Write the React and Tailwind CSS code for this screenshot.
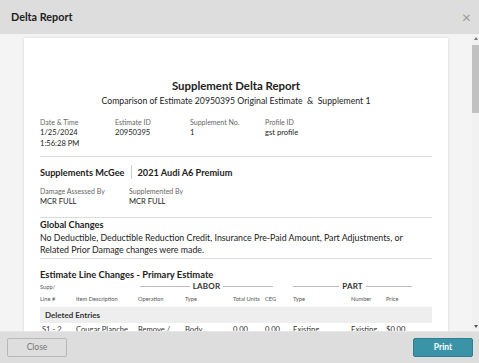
import React from 'react'

const lato = { fontFamily: 'Lato, "Open Sans", sans-serif' }

function Field({ label, children, w = 'w-[75px]' }) {
  return (
    <div className={w}>
      <div className="text-[7px] leading-[9px] text-[#666]">{label}</div>
      <div className="text-[7.6px] leading-[11px] text-[#222]">{children}</div>
    </div>
  )
}

function RuleLabel({ label, left, width }) {
  return (
    <div className="absolute top-0 flex items-center" style={{ left, width }}>
      <div className="h-px flex-1 bg-[#bbb]" />
      <span className="px-[3px] text-[8px] font-bold leading-[10px] tracking-wide text-[#333]">{label}</span>
      <div className="h-px flex-1 bg-[#bbb]" />
    </div>
  )
}

const cols = [
  ['Line #', 0],
  ['Item Description', 36],
  ['Operation', 98],
  ['Type', 145],
  ['Total Units', 193],
  ['CEG', 225],
  ['Type', 253],
  ['Number', 311],
  ['Price', 346],
]

const row = ['S1 -  2', 'Cougar Plancher Au...', 'Remove /', 'Body', '0.00', '0.00', 'Existing', 'Existing', '$0.00']

export default function App() {
  return (
    <div className="flex h-[363px] w-[479px] flex-col overflow-hidden bg-[#f4f4f4]" style={lato}>
      {/* header */}
      <div className="flex h-[34px] shrink-0 items-center justify-between bg-[#dddddd] pl-[11px] pr-[8px]">
        <span className="text-[10.8px] font-bold text-[#222]">Delta Report</span>
        <span className="text-[16px] leading-none text-[#9a9a9a]">×</span>
      </div>

      {/* body */}
      <div className="flex min-h-0 flex-1">
        <div className="min-w-0 flex-1 overflow-hidden pl-[24px] pr-[24px] pt-[4px]">
          <div className="w-[424px] bg-white px-[16px] pt-[40px] shadow-[0_0_3px_rgba(0,0,0,0.12)]">
            <div className="text-center text-[11.4px] font-bold leading-[16px] text-[#222]">Supplement Delta Report</div>
            <div className="text-center text-[8.7px] leading-[13px] text-[#222]">
              Comparison of Estimate 20950395 Original Estimate &nbsp;&amp;&nbsp; Supplement 1
            </div>

            <div className="mt-[11px] flex">
              <Field label="Date & Time">
                1/25/2024
                <br />
                1:56:28 PM
              </Field>
              <Field label="Estimate ID">20950395</Field>
              <Field label="Supplement No.">1</Field>
              <Field label="Profile ID">gst profile</Field>
            </div>

            <div className="mt-[7px] h-px bg-[#dcdcdc]" />

            <div className="mt-[8px] flex items-center text-[9.2px] font-bold leading-[13px] text-[#222]">
              <span>Supplements McGee</span>
              <span className="mx-[6px] h-[14px] w-px bg-[#ccc]" />
              <span>2021 Audi A6 Premium</span>
            </div>
            <div className="mt-[8px] flex">
              <Field label="Damage Assessed By" w="w-[89px]">MCR FULL</Field>
              <Field label="Supplemented By" w="w-[90px]">MCR FULL</Field>
            </div>

            <div className="mt-[10px] h-px bg-[#dcdcdc]" />

            <div className="mt-[0px] text-[9.2px] font-bold leading-[13px] text-[#222]">Global Changes</div>
            <p className="mt-[1px] text-[8.8px] leading-[12px] text-[#222]">
              No Deductible, Deductible Reduction Credit, Insurance Pre-Paid Amount, Part Adjustments, or Related Prior Damage changes were made.
            </p>

            <div className="mt-[2px] h-px bg-[#dcdcdc]" />

            <div className="mt-[9px] text-[9.4px] font-bold leading-[13px] text-[#222]">Estimate Line Changes - Primary Estimate</div>

            <div className="relative h-[24px] text-[5.7px] text-[#555]">
              <span className="absolute left-0 top-[2px] leading-[8px]">Supp/</span>
              <RuleLabel label="LABOR" left={100} width={133} />
              <RuleLabel label="PART" left={253} width={119} />
              {cols.map(([c, x], i) => (
                <span key={i} className="absolute top-[14px] leading-[8px]" style={{ left: x }}>{c}</span>
              ))}
            </div>

            <div className="mt-[2px] flex h-[16px] items-center bg-[#eeeeee] px-[5px] text-[8px] font-bold text-[#333]">Deleted Entries</div>

            <div className="relative h-[20px] text-[7.6px] text-[#333]">
              {row.map((c, i) => (
                <span
                  key={i}
                  className={i === 1 ? 'absolute top-[1px] w-[58px] truncate leading-[10px]' : 'absolute top-[1px] leading-[10px]'}
                  style={{ left: (i === 0 ? 2 : cols[i][1]) }}
                >
                  {c}
                </span>
              ))}
            </div>
          </div>
        </div>

        {/* scrollbar */}
        <div className="flex w-[7px] shrink-0 flex-col items-center bg-[#f1f1f1]">
          <div className="mt-[3px] h-0 w-0 border-x-[2.5px] border-b-[3px] border-x-transparent border-b-[#777]" />
          <div className="mt-[5px] h-[68px] w-[7px] bg-[#c1c1c1]" />
          <div className="flex-1" />
          <div className="mb-[3px] h-0 w-0 border-x-[2.5px] border-t-[3px] border-x-transparent border-t-[#555]" />
        </div>
      </div>

      {/* footer */}
      <div className="flex h-[32px] shrink-0 items-center justify-between border-t border-[#e6e6e6] bg-[#dddddd] pl-[7px] pr-[6px]">
        <button className="h-[19px] w-[60px] rounded-[2px] border border-[#b8b8b8] bg-[#dedede] text-[8.5px] text-[#777]">Close</button>
        <button className="h-[19px] w-[60px] rounded-[2px] border border-[#2f7e92] bg-[#3b93a8] text-[8.5px] font-bold text-white">Print</button>
      </div>
    </div>
  )
}
